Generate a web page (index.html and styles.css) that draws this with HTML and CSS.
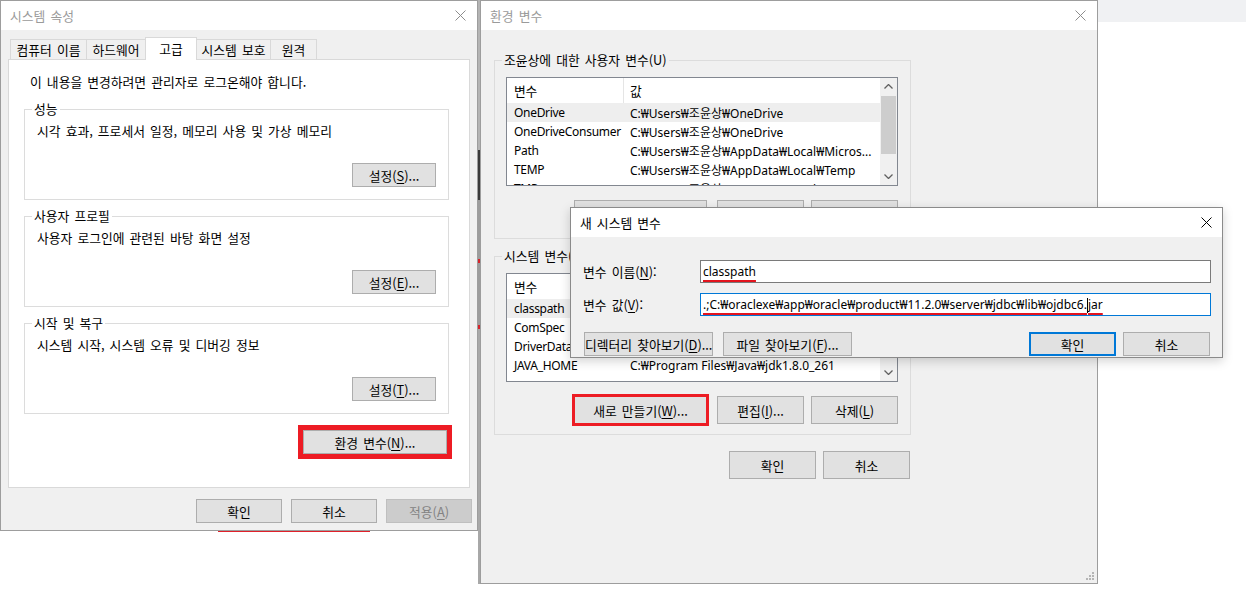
FILE: index.html
```html
<!DOCTYPE html>
<html lang="ko">
<head>
    <meta charset="UTF-8">
    <title>환경 변수 설정</title>
    <link rel="stylesheet" href="styles.css">
</head>
<body>
    <div class="desk-strip"></div>
    <div class="desk-band"></div>
    <div class="desk-line"></div>

    <!-- 시스템 속성 -->
    <div class="win win-sys">
        <div class="titlebar">
            <span>시스템 속성</span>
            <svg class="x" width="11" height="11" viewBox="0 0 11 11"><path d="M0.5 0.5l10 10M10.5 0.5l-10 10" stroke="currentColor" fill="none"/></svg>
        </div>
        <div class="tabs">
            <div class="tab t1">컴퓨터 이름</div>
            <div class="tab t2">하드웨어</div>
            <div class="tab t3 on">고급</div>
            <div class="tab t4">시스템 보호</div>
            <div class="tab t5">원격</div>
        </div>
        <div class="tab-panel">
            <p class="notice">이 내용을 변경하려면 관리자로 로그온해야 합니다.</p>
            <div class="group">
                <span class="legend">성능</span>
                <p>시각 효과, 프로세서 일정, 메모리 사용 및 가상 메모리</p>
                <button class="btn">설정(<u>S</u>)...</button>
            </div>
            <div class="group">
                <span class="legend">사용자 프로필</span>
                <p>사용자 로그인에 관련된 바탕 화면 설정</p>
                <button class="btn">설정(<u>E</u>)...</button>
            </div>
            <div class="group">
                <span class="legend">시작 및 복구</span>
                <p>시스템 시작, 시스템 오류 및 디버깅 정보</p>
                <button class="btn">설정(<u>T</u>)...</button>
            </div>
            <div class="env-row">
                <button class="btn btn-env marked">환경 변수(<u>N</u>)...</button>
            </div>
        </div>
        <div class="dlg-buttons">
            <button class="btn">확인</button>
            <button class="btn">취소</button>
            <button class="btn" disabled>적용(<u>A</u>)</button>
        </div>
    </div>

    <!-- 환경 변수 -->
    <div class="win win-env">
        <div class="titlebar">
            <span>환경 변수</span>
            <svg class="x" width="11" height="11" viewBox="0 0 11 11"><path d="M0.5 0.5l10 10M10.5 0.5l-10 10" stroke="currentColor" fill="none"/></svg>
        </div>
        <div class="env-body">
            <div class="vgroup">
                <span class="legend">조윤상에 대한 사용자 변수(U)</span>
                <div class="list">
                    <div class="list-body">
                        <div class="row head"><span class="c1">변수</span><span class="c2">값</span></div>
                        <div class="row sel"><span class="c1">OneDrive</span><span class="c2">C:₩Users₩조윤상₩OneDrive</span></div>
                        <div class="row"><span class="c1">OneDriveConsumer</span><span class="c2">C:₩Users₩조윤상₩OneDrive</span></div>
                        <div class="row"><span class="c1">Path</span><span class="c2">C:₩Users₩조윤상₩AppData₩Local₩Micros...</span></div>
                        <div class="row"><span class="c1">TEMP</span><span class="c2">C:₩Users₩조윤상₩AppData₩Local₩Temp</span></div>
                        <div class="row"><span class="c1">TMP</span><span class="c2">C:₩Users₩조윤상₩AppData₩Local₩Temp</span></div>
                    </div>
                    <div class="scrollbar">
                        <div class="sb-arrow"><svg width="9" height="5" viewBox="0 0 9 5"><path d="M0.5 4.5l4-4 4 4" stroke="#606060" stroke-width="1.3" fill="none"/></svg></div>
                        <div class="sb-thumb"></div>
                        <div class="sb-track"></div>
                        <div class="sb-arrow"><svg width="9" height="5" viewBox="0 0 9 5"><path d="M0.5 0.5l4 4 4-4" stroke="#606060" stroke-width="1.3" fill="none"/></svg></div>
                    </div>
                </div>
                <div class="vbuttons">
                    <button class="btn btn-new">새로 만들기(<u>N</u>)...</button>
                    <button class="btn">편집(<u>E</u>)...</button>
                    <button class="btn">삭제(<u>D</u>)</button>
                </div>
            </div>

            <div class="vgroup">
                <span class="legend">시스템 변수(S)</span>
                <div class="list">
                    <div class="list-body">
                        <div class="row head"><span class="c1">변수</span><span class="c2">값</span></div>
                        <div class="row sel"><span class="c1">classpath</span><span class="c2">.;C:₩oraclexe₩app₩oracle₩product₩11.2.0₩server₩jdbc₩lib₩ojdbc6.jar</span></div>
                        <div class="row"><span class="c1">ComSpec</span><span class="c2">C:₩WINDOWS₩system32₩cmd.exe</span></div>
                        <div class="row"><span class="c1">DriverData</span><span class="c2">C:₩Windows₩System32₩Drivers₩DriverData</span></div>
                        <div class="row"><span class="c1">JAVA_HOME</span><span class="c2">C:₩Program Files₩Java₩jdk1.8.0_261</span></div>
                    </div>
                    <div class="scrollbar">
                        <div class="sb-arrow"><svg width="9" height="5" viewBox="0 0 9 5"><path d="M0.5 4.5l4-4 4 4" stroke="#606060" stroke-width="1.3" fill="none"/></svg></div>
                        <div class="sb-thumb"></div>
                        <div class="sb-track"></div>
                        <div class="sb-arrow"><svg width="9" height="5" viewBox="0 0 9 5"><path d="M0.5 0.5l4 4 4-4" stroke="#606060" stroke-width="1.3" fill="none"/></svg></div>
                    </div>
                </div>
                <div class="vbuttons">
                    <button class="btn btn-new marked">새로 만들기(<u>W</u>)...</button>
                    <button class="btn">편집(<u>I</u>)...</button>
                    <button class="btn">삭제(<u>L</u>)</button>
                </div>
            </div>

            <div class="dlg-buttons env-ok">
                <button class="btn">확인</button>
                <button class="btn">취소</button>
            </div>
        </div>
        <svg class="grip" width="9" height="9" viewBox="0 0 9 9">
            <rect x="6" y="0" width="2" height="2" fill="#b5b5b5"/>
            <rect x="3" y="3" width="2" height="2" fill="#b5b5b5"/>
            <rect x="6" y="3" width="2" height="2" fill="#b5b5b5"/>
            <rect x="0" y="6" width="2" height="2" fill="#b5b5b5"/>
            <rect x="3" y="6" width="2" height="2" fill="#b5b5b5"/>
            <rect x="6" y="6" width="2" height="2" fill="#b5b5b5"/>
        </svg>
    </div>

    <!-- 새 시스템 변수 -->
    <div class="win win-new active">
        <div class="titlebar">
            <span>새 시스템 변수</span>
            <svg class="x" width="11" height="11" viewBox="0 0 11 11"><path d="M0.5 0.5l10 10M10.5 0.5l-10 10" stroke="currentColor" fill="none"/></svg>
        </div>
        <div class="new-body">
            <div class="field">
                <label>변수 이름(<u>N</u>):</label>
                <div class="input"><span class="scribble">classpath</span></div>
            </div>
            <div class="field">
                <label>변수 값(<u>V</u>):</label>
                <div class="input focus"><span class="scribble long">.;C:₩oraclexe₩app₩oracle₩product₩11.2.0₩server₩jdbc₩lib₩ojdbc6.<span class="caret"></span>jar</span></div>
            </div>
            <div class="new-buttons">
                <button class="btn btn-browse">디렉터리 찾아보기(<u>D</u>)...</button>
                <button class="btn btn-browse">파일 찾아보기(<u>F</u>)...</button>
                <button class="btn btn-default">확인</button>
                <button class="btn">취소</button>
            </div>
        </div>
    </div>
</body>
</html>
```

FILE: styles.css
```css
* {
    box-sizing: border-box;
}
body {
    margin: 0;
    width: 1246px;
    height: 598px;
    position: relative;
    overflow: hidden;
    background: #ffffff;
    font-family: "Noto Sans CJK KR", "Noto Sans", sans-serif;
    font-size: 12.8px;
    color: #000000;
    word-spacing: 1.5px;
}
p {
    margin: 0;
}
u {
    text-decoration-thickness: 1px;
    text-underline-offset: 2px;
}

/* 뒤에 깔린 창의 흔적 */
.desk-strip {
    position: absolute;
    left: 478px;
    top: 0;
    width: 2px;
    height: 584px;
    background: linear-gradient(#b4b4b4 0 150px, #3a3a3a 150px 200px, #9c9c9c 200px 259px, #d8232a 259px 263px, #9c9c9c 263px 325px, #d8232a 325px 329px, #a8a8a8 329px);
}
.desk-band {
    position: absolute;
    left: 1098px;
    top: 0;
    width: 148px;
    height: 22px;
    background: #f0f1f3;
}
.desk-line {
    position: absolute;
    left: 218px;
    top: 530px;
    width: 152px;
    height: 2px;
    background: #e0202a;
}

/* 창 공통 */
.win {
    position: absolute;
    background: #f0f0f0;
    border: 1px solid #9d9d9d;
    overflow: hidden;
}
.titlebar {
    height: 29px;
    background: #ffffff;
    display: flex;
    align-items: center;
    justify-content: space-between;
    padding: 0 11px 0 9px;
    color: #9a9a9a;
}
.titlebar .x {
    color: #8c8c8c;
}
.win.active .titlebar,
.win.active .titlebar .x {
    color: #000000;
}
.btn {
    width: 86px;
    height: 24px;
    padding: 0;
    border: 1px solid #adadad;
    background: #e1e1e1;
    font: inherit;
    word-spacing: inherit;
    color: #000000;
    white-space: nowrap;
}
.btn:disabled {
    background: #cccccc;
    border-color: #bfbfbf;
    color: #838383;
}
.marked {
    outline: 4px solid #ed1c24;
    outline-offset: 0;
}
.legend {
    position: absolute;
    top: -9px;
    left: 7px;
    padding: 0 2px;
    line-height: 16px;
    white-space: nowrap;
}
.dlg-buttons {
    display: flex;
    justify-content: flex-end;
    gap: 9px;
}

/* 시스템 속성 */
.win-sys {
    left: 0;
    top: 0;
    width: 478px;
    height: 531px;
}
.tabs {
    display: flex;
    align-items: flex-end;
    height: 29px;
    padding-left: 10px;
}
.tab {
    height: 20px;
    margin-left: -1px;
    border: 1px solid #d9d9d9;
    border-bottom: none;
    display: flex;
    align-items: center;
    justify-content: center;
    white-space: nowrap;
}
.tab.on {
    height: 23px;
    margin-bottom: -1px;
    padding-bottom: 2px;
    background: #ffffff;
    position: relative;
    z-index: 1;
}
.t1 { width: 77px; }
.t2 { width: 60px; }
.t3 { width: 52px; }
.t4 { width: 75px; }
.t5 { width: 47px; }
.tab-panel {
    margin: 0 7px;
    height: 429px;
    background: #ffffff;
    border: 1px solid #d9d9d9;
    padding: 14px 20px 0 15px;
}
.notice {
    padding-left: 6px;
    line-height: 16px;
}
.group {
    position: relative;
    height: 91px;
    margin-top: 16px;
    border: 1px solid #dcdcdc;
    padding: 13px 12px 12px 12px;
    display: flex;
    flex-direction: column;
    justify-content: space-between;
    align-items: flex-end;
}
.notice + .group {
    margin-top: 19px;
}
.group p {
    align-self: stretch;
    line-height: 16px;
}
.group .legend {
    background: #ffffff;
}
.group .btn {
    width: 84px;
}
.env-row {
    display: flex;
    justify-content: flex-end;
    margin-top: 16px;
    padding-right: 2px;
}
.btn-env {
    width: 144px;
    outline-width: 5px;
}
.win-sys .dlg-buttons {
    margin-top: 11px;
    padding-right: 5px;
}

/* 환경 변수 */
.win-env {
    left: 480px;
    top: 0;
    width: 618px;
    height: 584px;
}
.env-body {
    padding: 30px 13px 0 13px;
}
.vgroup {
    position: relative;
    width: 417px;
    border: 1px solid #dcdcdc;
    padding: 16px 12px 10px 11px;
}
.vgroup + .vgroup {
    margin-top: 17px;
}
.vgroup .legend {
    background: #f0f0f0;
}
.list {
    display: flex;
    height: 109px;
    border: 1px solid #828790;
    background: #ffffff;
    overflow: hidden;
}
.list-body {
    flex: 1;
    overflow: hidden;
}
.row {
    display: flex;
    align-items: center;
    height: 19px;
    white-space: nowrap;
    font-family: "Noto Sans", "Noto Sans CJK KR", sans-serif;
    font-size: 12px;
    word-spacing: 0;
}
.row.head {
    height: 25px;
    font-family: inherit;
    font-size: 12.8px;
}
.row.sel {
    background: #eeeeee;
}
.row .c1 {
    width: 117px;
    flex-shrink: 0;
    padding-left: 7px;
    letter-spacing: -0.3px;
}
.row .c2 {
    padding-left: 6px;
}
.row.head .c1 {
    height: 100%;
    display: flex;
    align-items: center;
    border-right: 1px solid #e5e5e5;
}
.scrollbar {
    width: 17px;
    display: flex;
    flex-direction: column;
    background: #f0f0f0;
}
.sb-arrow {
    height: 17px;
    display: flex;
    align-items: center;
    justify-content: center;
}
.sb-thumb {
    height: 58px;
    margin: 1px 1px 0 1px;
    background: #cdcdcd;
}
.sb-track {
    flex: 1;
}
.vbuttons {
    display: flex;
    justify-content: flex-end;
    gap: 7px;
    margin-top: 14px;
}
.vbuttons .btn {
    width: 87px;
    height: 28px;
}
.vbuttons .btn-new {
    width: 133px;
    margin-right: 3px;
    outline-width: 3px;
    outline-offset: -1px;
}
.env-ok {
    width: 417px;
    margin-top: 16px;
    gap: 7px;
    padding-right: 1px;
}
.env-ok .btn {
    width: 87px;
    height: 28px;
}
.grip {
    position: absolute;
    right: 2px;
    bottom: 2px;
}

/* 새 시스템 변수 */
.win-new {
    left: 570px;
    top: 207px;
    width: 653px;
    height: 151px;
    border-color: #8a8a8a;
    box-shadow: 0 3px 10px rgba(0, 0, 0, 0.18);
}
.win-new .titlebar {
    padding-right: 10px;
}
.new-body {
    padding: 23px 11px 0 12px;
}
.field {
    display: flex;
    align-items: center;
    height: 23px;
}
.field + .field {
    margin-top: 10px;
}
.field label {
    width: 117px;
    flex-shrink: 0;
}
.input {
    flex: 1;
    height: 23px;
    border: 1px solid #7a7a7a;
    background: #ffffff;
    padding-left: 2px;
    line-height: 21px;
    white-space: nowrap;
    overflow: hidden;
    font-family: "Noto Sans", "Noto Sans CJK KR", sans-serif;
    font-size: 12px;
    word-spacing: 0;
}
.input.focus {
    border-color: #0078d7;
}
.scribble {
    text-decoration: underline;
    text-decoration-color: #e3141e;
    text-decoration-thickness: 3px;
    text-underline-offset: 4px;
    text-decoration-skip-ink: none;
}
.caret {
    display: inline-block;
    width: 1px;
    height: 15px;
    background: #000000;
    vertical-align: middle;
}
.new-buttons {
    display: flex;
    gap: 10px;
    margin-top: 16px;
    padding: 0 1px;
}
.new-buttons .btn {
    width: 87px;
}
.new-buttons .btn-browse {
    width: 129px;
}
.new-buttons .btn-default {
    margin-left: auto;
    margin-right: -3px;
    border: 2px solid #0078d7;
}
```
